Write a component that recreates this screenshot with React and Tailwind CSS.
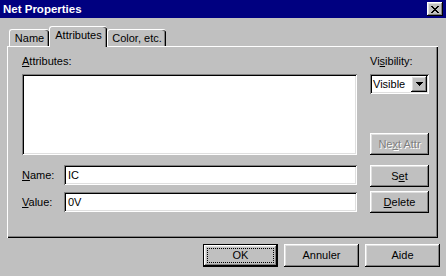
import React from 'react'

// win95-style bevels
const raised =
  'shadow-[inset_-1px_-1px_0_#000,inset_1px_1px_0_#fff,inset_-2px_-2px_0_#808080,inset_2px_2px_0_#dfdfdf]'
const sunken =
  'shadow-[inset_1px_1px_0_#808080,inset_-1px_-1px_0_#fff,inset_2px_2px_0_#000,inset_-2px_-2px_0_#dfdfdf]'

function Btn({ children, className = '', disabled }) {
  return (
    <div
      className={`flex items-center justify-center bg-[#c0c0c0] ${raised} ${
        disabled ? 'text-[#808080] [text-shadow:1px_1px_0_#fff]' : ''
      } ${className}`}
    >
      {children}
    </div>
  )
}

function Tab({ children, selected, className = '' }) {
  return (
    <div
      className={`flex items-center justify-center bg-[#c0c0c0] border-t border-l border-white rounded-tl-[3px] rounded-tr-[3px] shadow-[inset_-1px_0_0_#000,inset_-2px_0_0_#808080] ${
        selected ? 'relative z-10 h-[21px] mb-[-1px] pb-[3px]' : 'h-[17px] pt-[1px]'
      } ${className}`}
    >
      {children}
    </div>
  )
}

export default function App() {
  return (
    <div className="w-[446px] h-[276px] overflow-hidden bg-[#c0c0c0] text-[11px] leading-[13px] text-black font-['Liberation_Sans',Arial,sans-serif]">
      {/* title bar */}
      <div className="h-[18px] bg-[#000080] flex items-center justify-between px-[3px]">
        <span className="text-white font-bold text-[11.5px]">Net Properties</span>
        <div className={`w-[16px] h-[14px] bg-[#c0c0c0] ${raised} flex items-center justify-center`}>
          <svg width="8" height="7" viewBox="0 0 8 7" shapeRendering="crispEdges">
            <path
              fill="#000"
              d="M0 0h2v1H0z M6 0h2v1H6z M1 1h2v1H1z M5 1h2v1H5z M2 2h4v1H2z M3 3h2v1H3z M2 4h4v1H2z M1 5h2v1H1z M5 5h2v1H5z M0 6h2v1H0z M6 6h2v1H6z"
            />
          </svg>
        </div>
      </div>

      {/* tabs */}
      <div className="mt-[8px] ml-[9px] h-[20px] flex items-end">
        <Tab className="w-[40px] border-r-0">Name</Tab>
        <Tab selected className="w-[58px]">
          Attributes
        </Tab>
        <Tab className="w-[59px]">Color, etc.</Tab>
      </div>

      {/* panel */}
      <div className="ml-[7px] w-[431px] h-[192px] shadow-[inset_1px_1px_0_#fff,inset_-1px_-1px_0_#000,inset_-2px_-2px_0_#808080] pl-[15px] pt-[9px] flex gap-[13px]">
        <div className="w-[335px] flex flex-col">
          <div className="h-[13px]">
            <u>A</u>ttributes:
          </div>
          <div className={`mt-[6px] h-[81px] bg-white ${sunken}`} />
          <div className="mt-[10px] h-[20px] flex items-center">
            <div className="w-[42px]">
              <u>N</u>ame:
            </div>
            <div className={`w-[293px] h-[20px] bg-white ${sunken} flex items-center pl-[4px]`}>IC</div>
          </div>
          <div className="mt-[7px] h-[20px] flex items-center">
            <div className="w-[42px]">
              <u>V</u>alue:
            </div>
            <div className={`w-[293px] h-[20px] bg-white ${sunken} flex items-center pl-[4px]`}>0V</div>
          </div>
        </div>

        <div className="w-[59px] flex flex-col">
          <div className="h-[13px]">
            Vi<u>s</u>ibility:
          </div>
          <div className={`mt-[6px] h-[20px] bg-white ${sunken} flex items-center p-[2px]`}>
            <span className="flex-1 pl-[1px]">Visible</span>
            <div className={`w-[16px] h-[16px] bg-[#c0c0c0] ${raised} flex items-center justify-center`}>
              <svg width="7" height="4" viewBox="0 0 7 4" shapeRendering="crispEdges">
                <path fill="#000" d="M0 0h7v1H0z M1 1h5v1H1z M2 2h3v1H2z M3 3h1v1H3z" />
              </svg>
            </div>
          </div>
          <Btn disabled className="mt-[39px] h-[22px]">
            Ne<u>x</u>t Attr
          </Btn>
          <Btn className="mt-[10px] h-[22px]">
            S<u>e</u>t
          </Btn>
          <Btn className="mt-[4px] h-[22px]">
            <u>D</u>elete
          </Btn>
        </div>
      </div>

      {/* dialog buttons */}
      <div className="mt-[6px] ml-[203px] flex gap-[6px]">
        <div className="w-[75px] h-[23px] border border-black">
          <Btn className="h-full p-[3px]">
            <div className="w-full h-full border border-dotted border-black flex items-center justify-center">
              OK
            </div>
          </Btn>
        </div>
        <Btn className="w-[75px] h-[23px]">Annuler</Btn>
        <Btn className="w-[75px] h-[23px]">Aide</Btn>
      </div>
    </div>
  )
}
